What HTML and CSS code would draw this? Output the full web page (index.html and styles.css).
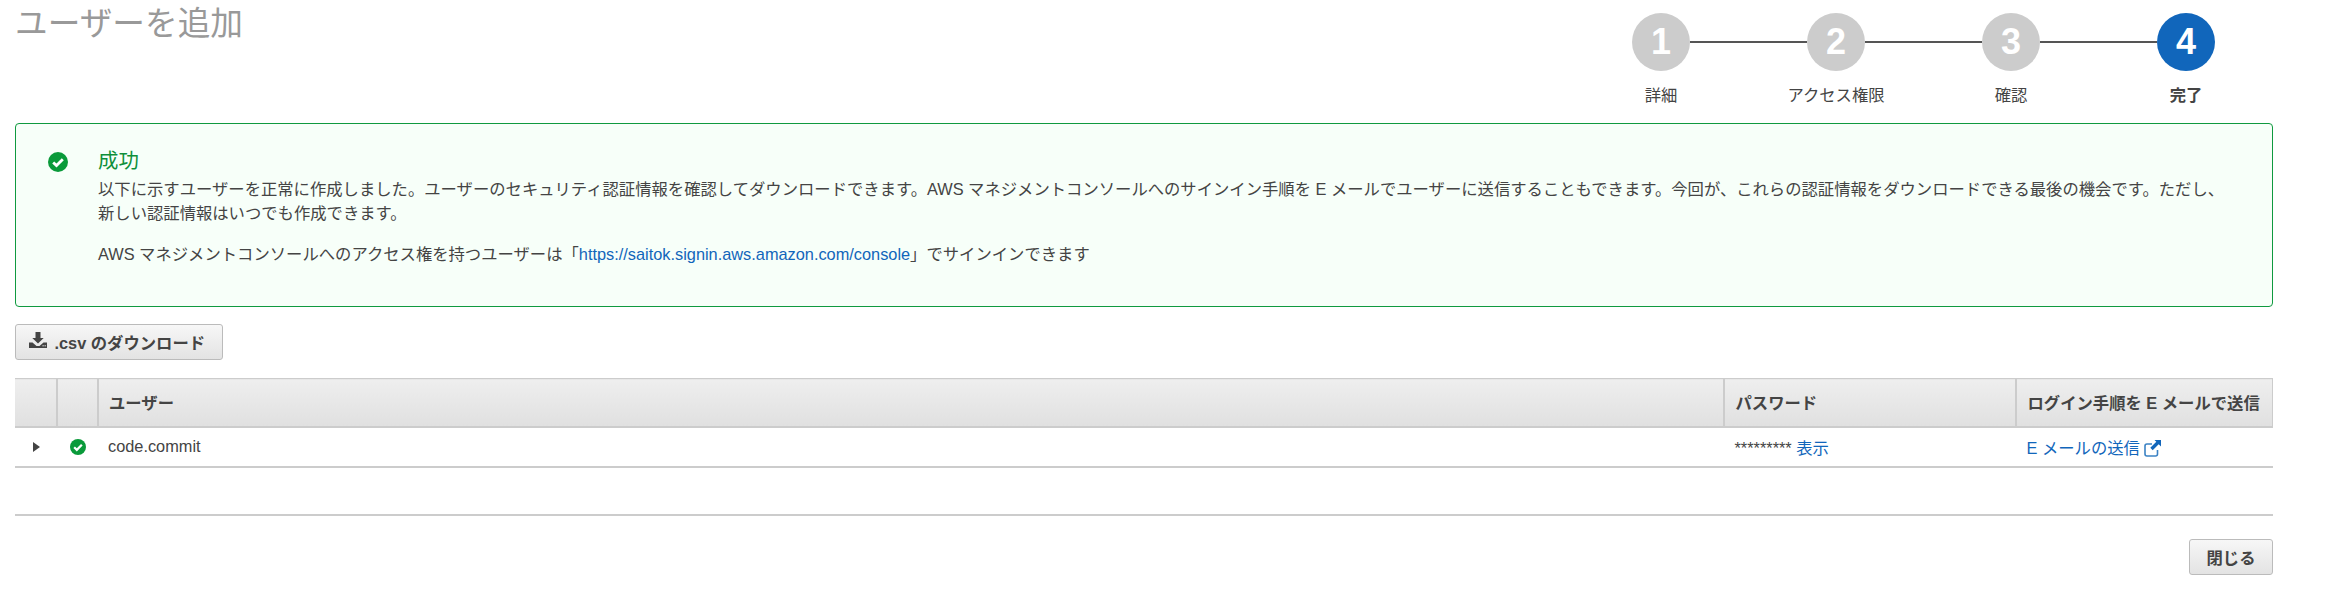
FILE: index.html
```html
<!DOCTYPE html>
<html>
  <head>
    <meta charset="utf-8">
    <title>ユーザーを追加</title>
    <link rel="stylesheet" href="styles.css">
  </head>
  <body>
    <svg class="defs">
      <symbol id="ok" viewBox="0 0 20 20">
        <circle cx="10" cy="10" r="10" fill="#0a9a3a"></circle>
        <path d="M5.2 10.4l3.3 3.2 6.3-6.4" fill="none" stroke="#fff" stroke-width="2.8"></path>
      </symbol>
    </svg>
    <div class="top">
      <h1 class="title">ユーザーを追加</h1>
      <div class="stepper">
        <div class="step"><span class="num">1</span><span class="label">詳細</span></div>
        <div class="link"></div>
        <div class="step"><span class="num">2</span><span class="label">アクセス権限</span></div>
        <div class="link"></div>
        <div class="step"><span class="num">3</span><span class="label">確認</span></div>
        <div class="link"></div>
        <div class="step current"><span class="num">4</span><span class="label">完了</span></div>
      </div>
    </div>

    <div class="alert">
      <svg class="alert-icon"><use href="#ok"></use></svg>
      <div class="alert-body">
        <div class="alert-title">成功</div>
        <p>以下に示すユーザーを正常に作成しました。ユーザーのセキュリティ認証情報を確認してダウンロードできます。AWS マネジメントコンソールへのサインイン手順を E メールでユーザーに送信することもできます。今回が、これらの認証情報をダウンロードできる最後の機会です。ただし、新しい認証情報はいつでも作成できます。</p>
        <p>AWS マネジメントコンソールへのアクセス権を持つユーザーは「<a href="#">https://saitok.signin.aws.amazon.com/console</a>」でサインインできます</p>
      </div>
    </div>

    <button class="btn btn-csv">
      <svg class="dl-icon" viewBox="0 0 18 16"><path d="M6.5 0h5v6h3.2L9 11.5 3.300 6h3.200zM0 10.500h3.500L7.500 14h3l4-3.500H18V16H0z" fill="#444"></path><path d="M13.500 13.800h1.200M15.600 13.800h1.200" stroke="#fff"></path></svg>
      .csv のダウンロード
    </button>

    <table class="users">
      <thead>
        <tr>
          <th class="expander"></th>
          <th class="status"></th>
          <th class="name">ユーザー</th>
          <th class="pw">パスワード</th>
          <th class="mail">ログイン手順を E メールで送信</th>
        </tr>
      </thead>
      <tbody>
        <tr>
          <td class="icon-cell"><span class="caret"></span></td>
          <td class="icon-cell"><svg class="row-ok"><use href="#ok"></use></svg></td>
          <td class="name">code.commit</td>
          <td><span class="stars">*********</span> <a href="#">表示</a></td>
          <td><a href="#">E メールの送信
            <svg class="ext" viewBox="0 0 17 17"><path d="M13.500 10v4a2 2 0 0 1-2 2H3a2 2 0 0 1-2-2V6a2 2 0 0 1 2-2h5" fill="none" stroke="#3b82c4" stroke-width="1.600"></path><path d="M10.500 0H17v6.500l-2.300-2.300-6 6-2.400-2.400 6-6z" fill="#1166bb"></path></svg>
          </a></td>
        </tr>
      </tbody>
    </table>

    <div class="footer">
      <button class="btn btn-close">閉じる</button>
    </div>
  </body>
</html>
```
FILE: styles.css
```css
* { box-sizing: border-box; }
html, body { overflow: hidden; }
body {
  margin: 0;
  padding: 0 71px 0 15px;
  height: 608px;
  font-family: "Liberation Sans", "Noto Sans CJK JP", sans-serif;
  font-size: 16.33px;
  color: #444;
  background: #fff;
}
a {
  color: #1166bb;
  text-decoration: none;
}
.defs {
  display: none;
}
.top {
  display: flex;
  justify-content: space-between;
  height: 123px;
}
.title {
  margin: 4px 0 0;
  font-size: 32.67px;
  line-height: 40px;
  font-weight: 400;
  color: #999;
}
.stepper {
  display: flex;
  align-items: flex-start;
  padding-top: 13px;
  margin-right: 58px;
}
.step {
  display: flex;
  flex-direction: column;
  align-items: center;
  width: 58px;
}
.num {
  width: 58px;
  height: 58px;
  border-radius: 50%;
  background: #ccc;
  color: #fff;
  font-size: 36px;
  font-weight: 700;
  line-height: 58px;
  text-align: center;
}
.label {
  margin-top: 14px;
  font-size: 16.33px;
  line-height: 20px;
  white-space: nowrap;
}
.link {
  width: 117px;
  height: 2px;
  margin-top: 28px;
  background: #555;
}
.current .num {
  background: #1166bb;
}
.current .label {
  font-weight: 700;
}
.alert {
  display: flex;
  height: 184px;
  border: 1px solid #0f9a3f;
  border-radius: 4px;
  background: #f7fff9;
  padding: 25px 32px 0 32px;
}
.alert-icon {
  width: 20px;
  height: 20px;
  flex: none;
  margin: 3px 30px 0 0;
}
.alert-body p {
  margin: 0 0 17px;
  line-height: 24px;
}
.alert-title {
  margin-bottom: 4px;
  font-size: 20.4px;
  line-height: 24px;
  color: #0f8f3a;
}
.btn {
  display: block;
  height: 36px;
  border: 1px solid #bbb;
  border-radius: 3px;
  background: linear-gradient(#f7f7f7, #e3e3e3);
  font-family: inherit;
  font-size: 16.33px;
  font-weight: 700;
  color: #444;
  padding: 0;
}
.btn-csv {
  width: 208px;
  margin-top: 17px;
  padding-right: 4px;
}
.dl-icon {
  width: 18px;
  height: 16px;
  margin-right: 3px;
  vertical-align: 1px;
}
.users {
  width: 100%;
  margin-top: 18px;
  border-collapse: collapse;
  table-layout: fixed;
}
.users th {
  height: 48px;
  padding: 0 11px;
  border: 1px solid #ccc;
  border-width: 1px 0 2px 2px;
  background: linear-gradient(#eee, #e0e0e0);
  text-align: left;
}
.users th:first-child {
  border-left: 0;
}
.users th:last-child {
  border-right: 1px solid #ccc;
}
.expander {
  width: 42px;
}
.status {
  width: 41px;
}
.pw {
  width: 292px;
}
.mail {
  width: 257px;
}
.users td {
  height: 40px;
  padding: 0 11px;
  border-bottom: 2px solid #ccc;
}
.users .name {
  padding-left: 10px;
}
.users td.icon-cell {
  padding: 0;
  text-align: center;
}
.caret {
  display: inline-block;
  border-left: 7px solid #444;
  border-top: 5.500px solid transparent;
  border-bottom: 5.500px solid transparent;
}
.row-ok {
  display: block;
  width: 16px;
  height: 16px;
  margin: 0 auto;
}
.ext {
  width: 17px;
  height: 17px;
  vertical-align: -3px;
}
.footer {
  margin-top: 46px;
  padding-top: 23px;
  border-top: 2px solid #ccc;
  display: flex;
  justify-content: flex-end;
}
.btn-close {
  width: 84px;
}
```
